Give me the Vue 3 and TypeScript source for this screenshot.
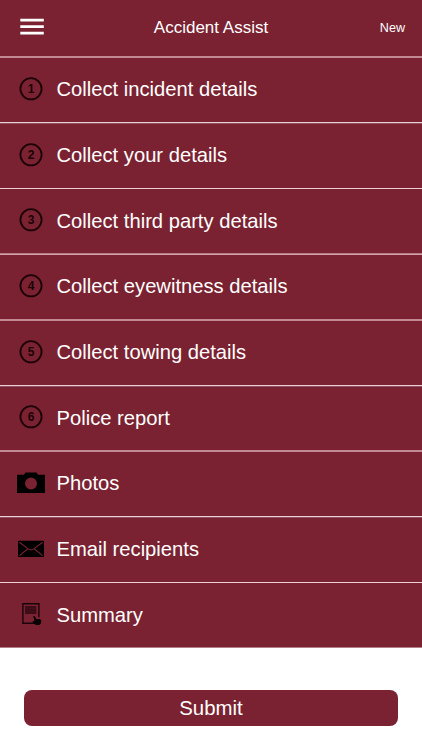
<script setup lang="ts">
interface Step {
  label: string
  icon: 'number' | 'camera' | 'mail' | 'summary'
  height: number
  rule: 'even' | 'upper' | 'lower' | 'thin'
}

const steps: Step[] = [
  { label: 'Collect incident details', icon: 'number', height: 66, rule: 'even' },
  { label: 'Collect your details', icon: 'number', height: 66, rule: 'upper' },
  { label: 'Collect third party details', icon: 'number', height: 65, rule: 'thin' },
  { label: 'Collect eyewitness details', icon: 'number', height: 66, rule: 'lower' },
  { label: 'Collect towing details', icon: 'number', height: 66, rule: 'even' },
  { label: 'Police report', icon: 'number', height: 65, rule: 'upper' },
  { label: 'Photos', icon: 'camera', height: 66, rule: 'even' },
  { label: 'Email recipients', icon: 'mail', height: 66, rule: 'upper' },
  { label: 'Summary', icon: 'summary', height: 66, rule: 'thin' },
]
</script>

<template>
  <main class="screen">
    <header class="bar">
      <button class="menu" aria-label="Menu">
        <svg width="24" height="18" viewBox="0 0 24 18">
          <path d="M.3 2.1h23.5M.3 8.6h23.5M.3 15.1h23.5" stroke="#fff" stroke-width="2.6" />
        </svg>
      </button>
      <h1 class="title">Accident Assist</h1>
      <button class="new">New</button>
    </header>

    <ul class="steps">
      <li
        v-for="(step, i) in steps"
        :key="step.label"
        class="step"
        :class="step.rule"
        :style="{ height: step.height + 'px' }"
      >
        <span class="icon">
          <svg v-if="step.icon === 'number'" width="28" height="28" viewBox="0 0 28 28">
            <circle cx="14" cy="12.8" r="10.6" fill="none" stroke="#1b0206" stroke-width="1.8" />
            <text x="14" y="17.1" text-anchor="middle" class="digit">{{ i + 1 }}</text>
          </svg>
          <svg v-else-if="step.icon === 'camera'" width="28" height="28" viewBox="0 0 28 28">
            <path
              fill="#000"
              fill-rule="evenodd"
              d="M0 4.8h7l1.5-2.2h11L21 4.8h7v18.3H0zM14 7.6a6 6 0 1 0 0 12a6 6 0 1 0 0-12z"
            />
          </svg>
          <svg v-else-if="step.icon === 'mail'" width="28" height="28" viewBox="0 0 28 28">
            <rect x="1" y="4.8" width="26" height="16.2" rx=".8" fill="#000" />
            <path
              d="M2.4 6.2l8.8 6.7q2.8 2 5.6 0l8.8-6.7M2.4 19.6l8.2-6.6M25.6 19.6l-8.2-6.6"
              fill="none"
              stroke="#7a2231"
              stroke-width="1.1"
            />
          </svg>
          <svg v-else width="28" height="28" viewBox="0 0 28 28">
            <path
              d="M18.8 22.2H5.9V2.7h16v13.5"
              fill="none"
              stroke="#19040a"
              stroke-width="1.4"
            />
            <rect x="8" y="5" width="11.3" height="8" fill="#3c0d17" />
            <path d="M8 7.6h11.3M8 10.3h11.3" stroke="#4d1420" stroke-width=".5" />
            <path
              d="M16.3 15l1.5.2 1.8 3 3.2-.2 1.5 1.5-.3 2.8-1.7 1.6h-3.5l-3.3-3 .3-.8 1.7.5z"
              fill="#080002"
            />
          </svg>
        </span>
        <span class="label">{{ step.label }}</span>
      </li>
    </ul>

    <footer class="footer">
      <button class="submit">Submit</button>
    </footer>
  </main>
</template>

<style>
body {
  margin: 0;
  background: #fff;
}
</style>

<style scoped>
.screen {
  width: 422px;
  height: 750px;
  overflow: hidden;
  display: flex;
  flex-direction: column;
  background: #fff;
  color: #fff;
  font-family: 'Liberation Sans', Arial, sans-serif;
}

button {
  border: 0;
  padding: 0;
  background: none;
  color: inherit;
  font-family: inherit;
}

.bar {
  flex: none;
  box-sizing: border-box;
  height: 56px;
  padding: 0 17px 1px 20px;
  display: grid;
  grid-template-columns: 60px 1fr 63px;
  align-items: center;
  background: #7a2231;
}

.menu {
  height: 18px;
  margin-bottom: 2px;
  display: flex;
}

.title {
  margin: 0;
  text-align: center;
  font-size: 17px;
  font-weight: 400;
}

.new {
  text-align: right;
  font-size: 12.6px;
}

.steps {
  flex: none;
  margin: 0;
  padding: 0;
  list-style: none;
}

.step {
  box-sizing: border-box;
  padding: 0 17px;
  display: flex;
  align-items: center;
  border-top: 1px solid #ecd0d5;
  background: #7a2231;
}

.step.even {
  border-top-color: #c28b94;
  box-shadow: inset 0 1px #c28b94;
}

.step.upper {
  box-shadow: inset 0 1px #905060;
}

.step.lower {
  border-top-color: #b87a85;
  box-shadow: inset 0 1px #d5a3ab;
}

.step:last-child {
  border-bottom: 1px solid #b47e88;
}

.icon {
  width: 28px;
  height: 28px;
  margin-right: 11.5px;
  display: flex;
}

.digit {
  font-size: 12px;
  font-weight: 700;
  fill: #1b0206;
}

.label {
  font-size: 20.2px;
  white-space: nowrap;
}

.footer {
  padding: 42px 24px 0;
}

.submit {
  width: 100%;
  height: 36px;
  padding-top: 1px;
  display: block;
  border-radius: 8px;
  background: #7a2231;
  text-align: center;
  font-size: 20.4px;
}
</style>
